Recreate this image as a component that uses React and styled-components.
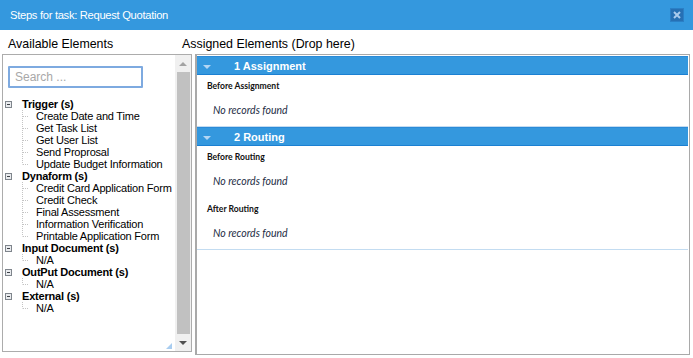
import React from 'react'
import styled, { createGlobalStyle } from 'styled-components'

const tree = [
    { label: 'Trigger (s)', items: ['Create Date and Time', 'Get Task List', 'Get User List', 'Send Proprosal', 'Update Budget Information'] },
    { label: 'Dynaform (s)', items: ['Credit Card Application Form', 'Credit Check', 'Final Assessment', 'Information Verification', 'Printable Application Form'] },
    { label: 'Input Document (s)', items: ['N/A'] },
    { label: 'OutPut Document (s)', items: ['N/A'] },
    { label: 'External (s)', items: ['N/A'] },
]

const steps = [
    { title: '1 Assignment', groups: ['Before Assignment'] },
    { title: '2 Routing', groups: ['Before Routing', 'After Routing'] },
]

function Toggle() {
    return (
        <svg width="7" height="7" viewBox="0 0 7 7">
            <rect x="0.5" y="0.5" width="6" height="6" fill="#e9ebee" stroke="#7f858c" />
            <line x1="2" y1="3.5" x2="5" y2="3.5" stroke="#3c4046" />
        </svg>
    )
}

function Branch({ last }) {
    return (
        <BranchSvg width="14" height="12" viewBox="0 0 14 12">
            <line x1="0.5" y1="0" x2="0.5" y2={last ? 6.5 : 12} stroke="#c4c4c4" strokeDasharray="1 1" />
            <line x1="1" y1="6.5" x2="6" y2="6.5" stroke="#c4c4c4" strokeDasharray="1 1" />
        </BranchSvg>
    )
}

function App() {
    return (
        <>
            <GlobalStyle />
            <Dialog>
                <TitleBar>
                    <Title>Steps for task: Request Quotation</Title>
                    <CloseButton>
                        <svg width="8" height="8" viewBox="0 0 8 8">
                            <path d="M1 1 L7 7 M7 1 L1 7" stroke="#a9cbee" strokeWidth="2" />
                        </svg>
                    </CloseButton>
                </TitleBar>

                <LabelsRow>
                    <ColumnLabel $width="174px">Available Elements</ColumnLabel>
                    <ColumnLabel>Assigned Elements (Drop here)</ColumnLabel>
                </LabelsRow>

                <PanelsRow>
                    <ListBox>
                        <ListContent>
                            <SearchInput placeholder="Search ..." />
                            <Tree>
                                {tree.map(group => (
                                    <li key={group.label}>
                                        <GroupRow>
                                            <Toggle />
                                            <GroupText>{group.label}</GroupText>
                                        </GroupRow>
                                        {group.items.map((item, i) => (
                                            <ChildRow key={item + i}>
                                                <Branch last={i === group.items.length - 1} />
                                                <ChildText>{item}</ChildText>
                                            </ChildRow>
                                        ))}
                                    </li>
                                ))}
                            </Tree>
                            <Grip />
                        </ListContent>
                        <Scrollbar>
                            <ScrollArrow $dir="up" />
                            <ScrollThumb />
                            <ScrollArrow $dir="down" />
                        </Scrollbar>
                    </ListBox>

                    <DropPanel>
                        {steps.map(step => (
                            <Section key={step.title}>
                                <SectionHeader>
                                    <Caret />
                                    <SectionTitle>{step.title}</SectionTitle>
                                </SectionHeader>
                                <SectionBody>
                                    {step.groups.map(g => (
                                        <Group key={g}>
                                            <GroupLabel>{g}</GroupLabel>
                                            <EmptyText>No records found</EmptyText>
                                        </Group>
                                    ))}
                                </SectionBody>
                            </Section>
                        ))}
                    </DropPanel>
                </PanelsRow>
            </Dialog>
        </>
    )
}

export default App


const GlobalStyle = createGlobalStyle`
    html, body {
        margin: 0;
        padding: 0;
        background: #fff;
    }
    body {
        font-family: "Liberation Sans", Arial, sans-serif;
    }
`

const Dialog = styled.div`
    width: 693px;
    height: 358px;
    display: flex;
    flex-direction: column;
    background: #fff;
    overflow: hidden;
`

const TitleBar = styled.div`
    height: 30px;
    flex: none;
    display: flex;
    align-items: center;
    justify-content: space-between;
    padding: 0 9px 0 10px;
    background: #3498de;
`

const Title = styled.div`
    color: #fff;
    font-size: 11.2px;
    letter-spacing: -0.3px;
`

const CloseButton = styled.div`
    width: 14px;
    height: 14px;
    display: flex;
    align-items: center;
    justify-content: center;
    background: #2670b4;
    border: 1px solid #2a7fc6;
    box-sizing: border-box;
    margin-top: -1px;
`

const LabelsRow = styled.div`
    height: 24px;
    flex: none;
    display: flex;
    padding-left: 8px;
`

const ColumnLabel = styled.div`
    width: ${p => p.$width || 'auto'};
    padding-top: 7px;
    font-size: 12.4px;
    line-height: 14px;
    color: #000;
`

const PanelsRow = styled.div`
    display: flex;
    align-items: flex-start;
    gap: 3px;
    padding-left: 2px;
`

const ListBox = styled.div`
    width: 190px;
    height: 298px;
    box-sizing: border-box;
    border: 1px solid #acacac;
    display: flex;
`

const ListContent = styled.div`
    flex: 1;
    display: flex;
    flex-direction: column;
    min-width: 0;
`

const SearchInput = styled.input`
    width: 135px;
    height: 22px;
    box-sizing: border-box;
    margin: 11px 0 0 5px;
    padding: 0 0 0 5px;
    border: 2px solid #7eaae0;
    border-radius: 1px;
    outline: none;
    font-family: "Liberation Sans", Arial, sans-serif;
    font-size: 12px;
    &::placeholder {
        color: #a8a8a8;
    }
`

const Tree = styled.ul`
    list-style: none;
    margin: 10px 0 0;
    padding: 0;
`

const GroupRow = styled.div`
    height: 12px;
    display: flex;
    align-items: center;
    padding-left: 2px;
    gap: 10px;
`

const GroupText = styled.span`
    font-size: 11px;
    font-weight: bold;
    letter-spacing: -0.2px;
    color: #000;
    white-space: nowrap;
`

const ChildRow = styled.div`
    height: 12px;
    display: flex;
    align-items: center;
    padding-left: 19px;
`

const BranchSvg = styled.svg`
    flex: none;
`

const ChildText = styled.span`
    font-size: 11px;
    letter-spacing: -0.2px;
    color: #000;
    white-space: nowrap;
`

const Grip = styled.div`
    margin: auto 3px 2px auto;
    width: 0;
    height: 0;
    border-left: 6px solid transparent;
    border-bottom: 6px solid #a9cdf0;
`

const Scrollbar = styled.div`
    width: 16px;
    flex: none;
    display: flex;
    flex-direction: column;
    background: #f0f0f0;
`

const ScrollArrow = styled.div`
    height: 17px;
    flex: none;
    display: flex;
    align-items: center;
    justify-content: center;
    &::before {
        content: '';
        border-left: 4px solid transparent;
        border-right: 4px solid transparent;
        ${p => p.$dir === 'up'
            ? 'border-bottom: 4px solid #a3a3a3;'
            : 'border-top: 4px solid #505050;'}
    }
`

const ScrollThumb = styled.div`
    flex: 1;
    margin: 0 1px 0 2px;
    background: #c1c1c1;
`

const DropPanel = styled.div`
    width: 495px;
    height: 301px;
    box-sizing: border-box;
    border: 1px solid #a9a9a9;
    border-left: 2px solid #a9a9a9;
    padding: 1px 1px 1px 0;
`

const Section = styled.div`
    border-bottom: 1px solid #c3dcf1;
`

const SectionHeader = styled.div`
    height: 17px;
    display: flex;
    align-items: center;
    background: #3498de;
    border-top: 1px solid #2b8bd8;
    border-bottom: 1px solid #1b80d2;
`

const Caret = styled.span`
    width: 0;
    height: 0;
    margin: 2px 23px 0 6px;
    border-left: 4px solid transparent;
    border-right: 4px solid transparent;
    border-top: 4px solid #b3d6f4;
`

const SectionTitle = styled.span`
    color: #fff;
    font-size: 11px;
    font-weight: bold;
`

const SectionBody = styled.div`
    display: flex;
    flex-direction: column;
    gap: 12px;
    padding: 3px 0 8px;
`

const Group = styled.div`
    display: flex;
    flex-direction: column;
    gap: 8px;
`

const GroupLabel = styled.div`
    padding-left: 10px;
    font-family: Lato, "Open Sans", sans-serif;
    font-size: 8.6px;
    font-weight: bold;
    line-height: 16px;
    color: #111;
`

const EmptyText = styled.div`
    padding-left: 16px;
    font-family: Lato, "Open Sans", sans-serif;
    font-size: 10.5px;
    font-style: italic;
    line-height: 16px;
    color: #242c44;
`
